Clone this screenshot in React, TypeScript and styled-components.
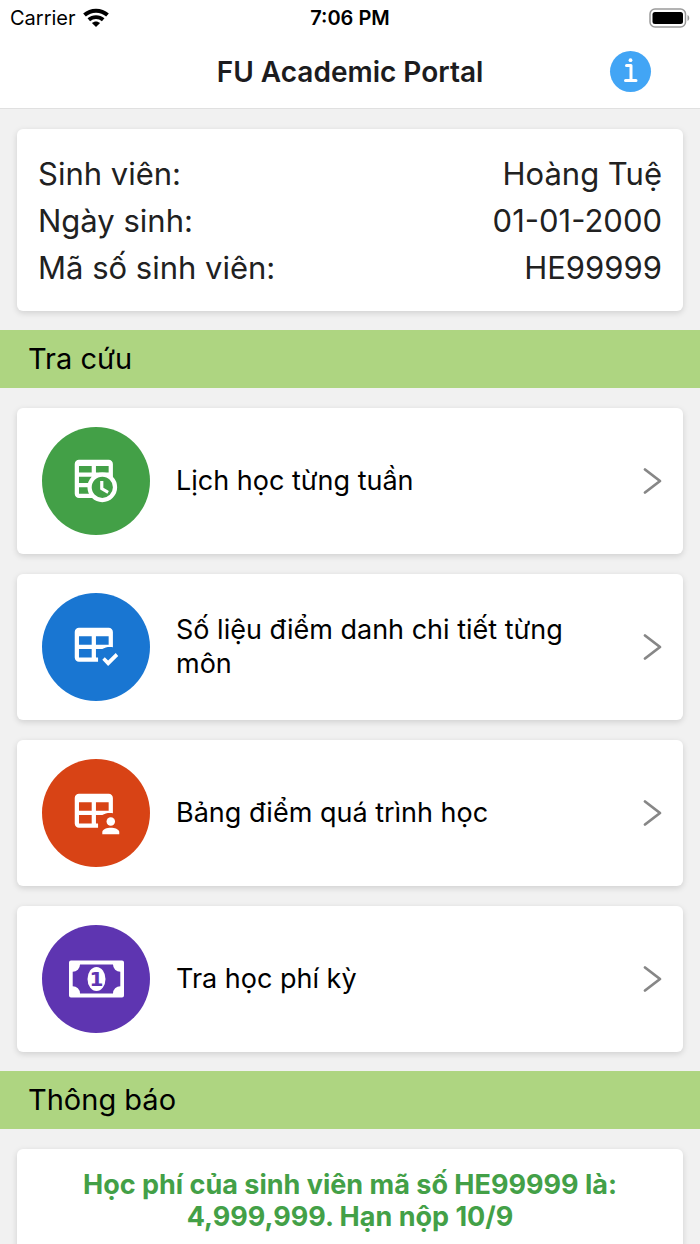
import React from "react";
import styled, { createGlobalStyle } from "styled-components";

const GlobalStyle = createGlobalStyle`
  *, *::before, *::after { box-sizing: border-box; }
  body {
    margin: 0;
    background: #f1f1f1;
    color: #000;
    font-family: Inter, "Liberation Sans", sans-serif;
  }
`;

const Screen = styled.div`
  display: flex;
  flex-direction: column;
  height: 100vh;
  overflow: hidden;
`;

const StatusBar = styled.div`
  flex: none;
  display: grid;
  grid-template-columns: 1fr auto 1fr;
  align-items: center;
  height: 35px;
  padding: 0 10px;
  background: #fff;
  font-size: 20px;
  line-height: 24px;
`;

const Carrier = styled.span`
  display: flex;
  align-items: center;
  gap: 7px;
`;

const Clock = styled.time`
  font-weight: 600;
`;

const Battery = styled.svg`
  justify-self: end;
`;

const TitleBar = styled.header`
  flex: none;
  display: grid;
  grid-template-columns: 1fr auto 1fr;
  align-items: center;
  height: 74px;
  padding: 0 49px;
  background: #fff;
  border-bottom: 1px solid #e0e0e0;
`;

const Title = styled.h1`
  grid-column: 2;
  margin: 0;
  color: #1c1c1e;
  font-size: 28px;
  line-height: 36px;
  font-weight: 600;
`;

const InfoButton = styled.button`
  justify-self: end;
  display: flex;
  padding: 0;
  border: 0;
  border-radius: 50%;
  background: #42a5f5;
  cursor: pointer;
`;

const Content = styled.main`
  flex: 1;
  min-height: 0;
  overflow: hidden;
`;

const Section = styled.div`
  display: flex;
  flex-direction: column;
  gap: 20px;
  padding: 20px 17px 19px;
`;

const Card = styled.div`
  border-radius: 6px;
  background: #fff;
  box-shadow: 0 2px 6px rgba(0, 0, 0, 0.14);
`;

const Details = styled(Card).attrs({ as: "dl" })`
  display: grid;
  grid-template-columns: auto auto;
  justify-content: space-between;
  margin: 0;
  padding: 21px 21px 20px;
  color: #212121;
  font-size: 31px;
  line-height: 47px;
`;

const Term = styled.dt``;

const Value = styled.dd`
  margin: 0;
  text-align: right;
`;

const Band = styled.h2`
  margin: 0;
  padding: 9px 28px;
  background: #aed581;
  font-size: 29px;
  line-height: 40px;
  font-weight: 400;
`;

const MenuLink = styled(Card).attrs({ as: "a" })<{ href?: string }>`
  display: flex;
  align-items: center;
  gap: 26px;
  min-height: 146px;
  padding: 18px 21px 18px 25px;
  color: #000;
  text-decoration: none;
`;

const Badge = styled.span<{ $color: string }>`
  flex: none;
  display: flex;
  border-radius: 50%;
  background: ${(p) => p.$color};
`;

const Label = styled.span`
  flex: 1;
  padding-right: 40px;
  font-size: 27px;
  line-height: 34px;
`;

const Notice = styled(Card).attrs({ as: "p" })`
  margin: 0;
  padding: 20px 40px;
  color: #43a047;
  font-size: 27px;
  line-height: 32px;
  font-weight: 700;
  text-align: center;
`;

const Glyph = ({ children }: { children: React.ReactNode }) => (
  <svg width="108" height="108" viewBox="0 0 108 108" fill="#fff" aria-hidden="true">
    {children}
  </svg>
);

const TABLE_PATH =
  "M4 3H18C19.1 3 20 3.9 20 5V12.1C18.3 11.8 16.4 12 15 13H12V17H13V19H4C2.9 19 2 18.1 2 17V5C2 3.9 2.9 3 4 3ZM4 7V11H10V7ZM12 7V11H18V7ZM4 13V17H10V13Z";

const ICON_SCALE = "translate(28.5 28.5) scale(2.12)";

const ScheduleIcon = () => (
  <Glyph>
    <g transform={ICON_SCALE}>
      <path
        fillRule="evenodd"
        d="M4 2H18C19.1 2 20 2.9 20 4V15H15V20H4C2.9 20 2 19.1 2 18V4C2 2.9 2.9 2 4 2ZM4 5V8H10V5ZM12 5V8H18V5ZM4 10V13H10V10ZM4 15V18H10V15Z"
      />
      <circle cx="15" cy="15" r="6" fill="#43a047" stroke="#fff" strokeWidth="2" />
      <path d="M14 12V16L17.4 18L18.1 16.8L15.5 15.2V12Z" />
    </g>
  </Glyph>
);

const AttendanceIcon = () => (
  <Glyph>
    <g transform={ICON_SCALE}>
      <path fillRule="evenodd" d={TABLE_PATH} />
      <path d="M17.75 21L15 18L16.16 16.84L17.75 18.43L21.34 14.84L22.5 16.25Z" />
    </g>
  </Glyph>
);

const GradesIcon = () => (
  <Glyph>
    <g transform={ICON_SCALE}>
      <path fillRule="evenodd" d={TABLE_PATH} />
      <circle cx="19" cy="16" r="2" />
      <path d="M23 22V21C23 19.7 20.7 19 19 19S15 19.7 15 21V22Z" />
    </g>
  </Glyph>
);

const FeeIcon = () => (
  <Glyph>
    <path
      fillRule="evenodd"
      d="M29 35.5H80Q82 35.5 82 37.5V70.5Q82 72.5 80 72.5H29Q27 72.5 27 70.5V37.5Q27 35.5 29 35.5ZM38 39.5A7.3 7.3 0 0 1 30.7 46.8V61.2A7.3 7.3 0 0 1 38 68.5H71A7.3 7.3 0 0 1 78.3 61.2V46.8A7.3 7.3 0 0 1 71 39.5Z"
    />
    <ellipse cx="54.5" cy="54" rx="9" ry="12" />
    <text
      x="54.5"
      y="61"
      textAnchor="middle"
      fill="#5e35b1"
      fontFamily="'DejaVu Sans', sans-serif"
      fontSize="20"
      fontWeight="700"
    >
      1
    </text>
  </Glyph>
);

const Chevron = () => (
  <svg width="20" height="28" viewBox="0 0 20 28" fill="none" aria-hidden="true">
    <path
      d="M3 2.5L18 14L3 25.5"
      stroke="#878787"
      strokeWidth="2.8"
      strokeLinecap="round"
      strokeLinejoin="round"
    />
  </svg>
);

const DETAILS = [
  ["Sinh viên:", "Hoàng Tuệ"],
  ["Ngày sinh:", "01-01-2000"],
  ["Mã số sinh viên:", "HE99999"],
];

const MENU = [
  { id: "lich-hoc", label: "Lịch học từng tuần", color: "#43a047", Icon: ScheduleIcon },
  { id: "diem-danh", label: "Số liệu điểm danh chi tiết từng môn", color: "#1976d2", Icon: AttendanceIcon },
  { id: "bang-diem", label: "Bảng điểm quá trình học", color: "#d84315", Icon: GradesIcon },
  { id: "hoc-phi", label: "Tra học phí kỳ", color: "#5e35b1", Icon: FeeIcon },
];

export default function App() {
  return (
    <Screen>
      <GlobalStyle />
      <StatusBar>
        <Carrier>
          Carrier
          <svg width="26" height="20" viewBox="0 0 26 20" fill="none" stroke="#000" aria-hidden="true">
            <path d="M1.5 7C8 1.2 18 1.2 24.5 7" strokeWidth="4" />
            <path d="M5.8 11.8C10 8.1 16 8.1 20.2 11.8" strokeWidth="3.8" />
            <path d="M13 19L8.9 15C11.3 12.9 14.7 12.9 17.1 15Z" fill="#000" stroke="none" />
          </svg>
        </Carrier>
        <Clock>7:06 PM</Clock>
        <Battery width="41" height="20" viewBox="0 0 41 20" role="img" aria-label="Battery full">
          <rect x="1" y="1" width="35.5" height="18" rx="5" fill="none" stroke="#9a9a9a" strokeWidth="1.5" />
          <rect x="3.5" y="4" width="30.5" height="12" rx="2.5" />
          <path d="M38.5 7C40.8 8 40.8 12 38.5 13Z" fill="#9a9a9a" />
        </Battery>
      </StatusBar>
      <TitleBar>
        <Title>FU Academic Portal</Title>
        <InfoButton type="button" aria-label="Info">
          <svg width="41" height="41" viewBox="0 0 41 41" fill="none" aria-hidden="true">
            <circle cx="20.5" cy="9.2" r="1.9" fill="#fff" />
            <path
              d="M16.5 14.5H21V29.5M15.5 29.5H26"
              stroke="#fff"
              strokeWidth="3"
              strokeLinecap="round"
              strokeLinejoin="round"
            />
          </svg>
        </InfoButton>
      </TitleBar>
      <Content>
        <Section>
          <Details>
            {DETAILS.map(([term, value]) => (
              <React.Fragment key={term}>
                <Term>{term}</Term>
                <Value>{value}</Value>
              </React.Fragment>
            ))}
          </Details>
        </Section>
        <Band>Tra cứu</Band>
        <Section>
          {MENU.map(({ id, label, color, Icon }) => (
            <MenuLink key={id} href={`#${id}`}>
              <Badge $color={color}>
                <Icon />
              </Badge>
              <Label>{label}</Label>
              <Chevron />
            </MenuLink>
          ))}
        </Section>
        <Band>Thông báo</Band>
        <Section>
          <Notice>Học phí của sinh viên mã số HE99999 là: 4,999,999. Hạn nộp 10/9</Notice>
        </Section>
      </Content>
    </Screen>
  );
}
